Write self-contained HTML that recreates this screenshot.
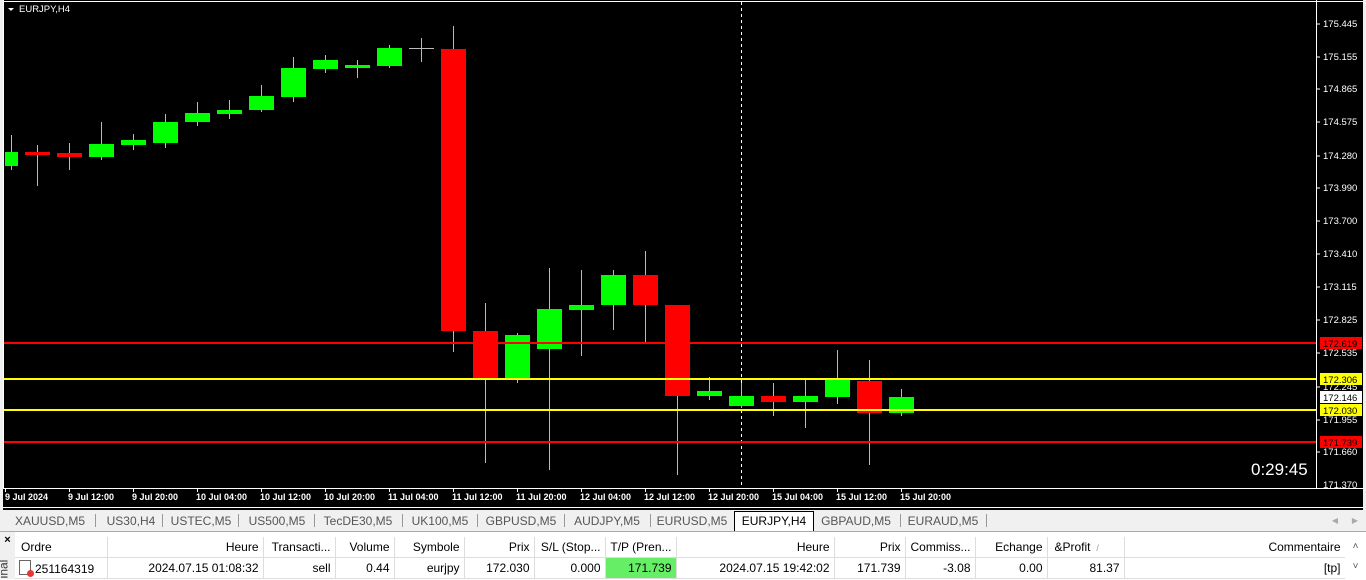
<!DOCTYPE html>
<html><head><meta charset="utf-8"><style>
body{margin:0;width:1366px;height:579px;overflow:hidden;background:#f0f0f0;font-family:"Liberation Sans",sans-serif;position:relative}
.abs{position:absolute}
svg text{font-family:"Liberation Sans",sans-serif}
.tabs{top:510px;left:0;width:1366px;height:21px;background:#f0f0f0;font-size:12px;color:#555}
.tab{position:absolute;top:3px;height:16px;line-height:16px;text-align:center}
.sep{position:absolute;top:4px;width:1px;height:13px;background:#999}
table{border-collapse:collapse;font-size:12px;color:#000;table-layout:fixed}
td{border-right:1px solid #ddd;border-bottom:1px solid #ddd;padding:0 4px;height:20px;white-space:nowrap;overflow:hidden;text-align:right;background:#fff}
</style></head><body>
<svg class="abs" style="left:0;top:0" width="1366" height="510">
<rect x="0" y="0" width="1366" height="510" fill="#000"/>
<rect x="0" y="0" width="3" height="510" fill="#f0f0f0"/>
<rect x="1363" y="0" width="3" height="510" fill="#f0f0f0"/>
<line x1="3" y1="1.5" x2="1363" y2="1.5" stroke="#fff"/>
<line x1="3.5" y1="0" x2="3.5" y2="489" stroke="#fff"/>
<line x1="1316.5" y1="0" x2="1316.5" y2="489" stroke="#fff"/>
<line x1="3" y1="488.5" x2="1363" y2="488.5" stroke="#fff"/>
<line x1="3" y1="507.5" x2="1363" y2="507.5" stroke="#fff"/>
<polygon points="8,8 14,8 11,11" fill="#fff"/>
<text x="19" y="12" fill="#fff" font-size="9.5">EURJPY,H4</text>
<line x1="741.5" y1="2" x2="741.5" y2="488" stroke="#fff" stroke-dasharray="3,3"/>
<g stroke="#bbb" stroke-width="1">
<line x1="11.5" y1="135" x2="11.5" y2="170"/><line x1="37.5" y1="145" x2="37.5" y2="186"/><line x1="69.5" y1="143" x2="69.5" y2="170"/><line x1="101.5" y1="122" x2="101.5" y2="160"/><line x1="133.5" y1="134" x2="133.5" y2="150"/><line x1="165.5" y1="114" x2="165.5" y2="148"/><line x1="197.5" y1="102" x2="197.5" y2="126"/><line x1="229.5" y1="100" x2="229.5" y2="119"/><line x1="261.5" y1="85" x2="261.5" y2="112"/><line x1="293.5" y1="57" x2="293.5" y2="102"/><line x1="325.5" y1="55" x2="325.5" y2="73"/><line x1="357.5" y1="60" x2="357.5" y2="78"/><line x1="389.5" y1="45" x2="389.5" y2="68"/><line x1="421.5" y1="38" x2="421.5" y2="62"/><line x1="409" y1="48.5" x2="434" y2="48.5"/><line x1="453.5" y1="26" x2="453.5" y2="352"/><line x1="485.5" y1="303" x2="485.5" y2="463"/><line x1="517.5" y1="333" x2="517.5" y2="383"/><line x1="549.5" y1="268" x2="549.5" y2="470"/><line x1="581.5" y1="270" x2="581.5" y2="356"/><line x1="613.5" y1="270" x2="613.5" y2="330"/><line x1="645.5" y1="251" x2="645.5" y2="342"/><line x1="677.5" y1="305" x2="677.5" y2="475"/><line x1="709.5" y1="377" x2="709.5" y2="400"/><line x1="741.5" y1="383" x2="741.5" y2="408"/><line x1="773.5" y1="383" x2="773.5" y2="416"/><line x1="805.5" y1="380" x2="805.5" y2="428"/><line x1="837.5" y1="350" x2="837.5" y2="404"/><line x1="869.5" y1="360" x2="869.5" y2="465"/><line x1="901.5" y1="389" x2="901.5" y2="416"/>
</g>
<g fill="#00ff00">
<rect x="5" y="152" width="13" height="14"/><rect x="89" y="144" width="25" height="13"/><rect x="121" y="140" width="25" height="5"/><rect x="153" y="122" width="25" height="21"/><rect x="185" y="113" width="25" height="9"/><rect x="217" y="110" width="25" height="4"/><rect x="249" y="96" width="25" height="14"/><rect x="281" y="68" width="25" height="29"/><rect x="313" y="60" width="25" height="9"/><rect x="345" y="65" width="25" height="3"/><rect x="377" y="48" width="25" height="18"/><rect x="505" y="335" width="25" height="44"/><rect x="537" y="309" width="25" height="40"/><rect x="569" y="305" width="25" height="5"/><rect x="601" y="275" width="25" height="30"/><rect x="697" y="391" width="25" height="5"/><rect x="729" y="396" width="25" height="10"/><rect x="793" y="396" width="25" height="6"/><rect x="825" y="379" width="25" height="18"/><rect x="889" y="397" width="25" height="16"/>
</g>
<g fill="#ff0000">
<rect x="25" y="152" width="25" height="3"/><rect x="57" y="153" width="25" height="4"/><rect x="441" y="49" width="25" height="282"/><rect x="473" y="331" width="25" height="48"/><rect x="633" y="275" width="25" height="30"/><rect x="665" y="305" width="25" height="91"/><rect x="761" y="396" width="25" height="6"/><rect x="857" y="381" width="25" height="32"/>
</g>
<line x1="4" y1="343" x2="1316" y2="343" stroke="#ff0000" stroke-width="2"/>
<line x1="4" y1="379" x2="1316" y2="379" stroke="#ffff00" stroke-width="2"/>
<line x1="4" y1="410" x2="1316" y2="410" stroke="#ffff00" stroke-width="2"/>
<line x1="4" y1="442" x2="1316" y2="442" stroke="#ff0000" stroke-width="2"/>
<g fill="#fff" font-size="9.5">
<text x="1323" y="27">175.445</text><text x="1323" y="60">175.155</text><text x="1323" y="92">174.865</text><text x="1323" y="125">174.575</text><text x="1323" y="159">174.280</text><text x="1323" y="191">173.990</text><text x="1323" y="224">173.700</text><text x="1323" y="257">173.410</text><text x="1323" y="290">173.115</text><text x="1323" y="323">172.825</text><text x="1323" y="356">172.535</text><text x="1323" y="390">172.245</text><text x="1323" y="423">171.955</text><text x="1323" y="455">171.660</text><text x="1323" y="488">171.370</text>
</g>
<g stroke="#fff"><line x1="1317" y1="24" x2="1320" y2="24"/><line x1="1317" y1="57" x2="1320" y2="57"/><line x1="1317" y1="89" x2="1320" y2="89"/><line x1="1317" y1="122" x2="1320" y2="122"/><line x1="1317" y1="156" x2="1320" y2="156"/><line x1="1317" y1="188" x2="1320" y2="188"/><line x1="1317" y1="221" x2="1320" y2="221"/><line x1="1317" y1="254" x2="1320" y2="254"/><line x1="1317" y1="287" x2="1320" y2="287"/><line x1="1317" y1="320" x2="1320" y2="320"/><line x1="1317" y1="353" x2="1320" y2="353"/><line x1="1317" y1="387" x2="1320" y2="387"/><line x1="1317" y1="420" x2="1320" y2="420"/><line x1="1317" y1="452" x2="1320" y2="452"/></g>
<rect x="1320" y="337" width="42" height="12" fill="#ff0000"/><text x="1323" y="347" font-size="9.5" fill="#000">172.619</text>
<rect x="1320" y="373" width="42" height="12" fill="#ffff00"/><text x="1323" y="383" font-size="9.5" fill="#000">172.306</text>
<rect x="1320" y="391" width="42" height="12" fill="#fff"/><text x="1323" y="401" font-size="9.5" fill="#000">172.146</text>
<rect x="1320" y="404" width="42" height="12" fill="#ffff00"/><text x="1323" y="414" font-size="9.5" fill="#000">172.030</text>
<rect x="1320" y="436" width="42" height="12" fill="#ff0000"/><text x="1323" y="446" font-size="9.5" fill="#000">171.739</text>
<text x="1251" y="475" fill="#fff" font-size="17">0:29:45</text>
<g fill="#fff" font-size="9" font-weight="bold">
<text x="5" y="500">9 Jul 2024</text><text x="68" y="500">9 Jul 12:00</text><text x="132" y="500">9 Jul 20:00</text><text x="196" y="500">10 Jul 04:00</text><text x="260" y="500">10 Jul 12:00</text><text x="324" y="500">10 Jul 20:00</text><text x="388" y="500">11 Jul 04:00</text><text x="452" y="500">11 Jul 12:00</text><text x="516" y="500">11 Jul 20:00</text><text x="580" y="500">12 Jul 04:00</text><text x="644" y="500">12 Jul 12:00</text><text x="708" y="500">12 Jul 20:00</text><text x="772" y="500">15 Jul 04:00</text><text x="836" y="500">15 Jul 12:00</text><text x="900" y="500">15 Jul 20:00</text>
</g>
<g stroke="#fff"><line x1="5.5" y1="489" x2="5.5" y2="492"/><line x1="69.5" y1="489" x2="69.5" y2="492"/><line x1="133.5" y1="489" x2="133.5" y2="492"/><line x1="197.5" y1="489" x2="197.5" y2="492"/><line x1="261.5" y1="489" x2="261.5" y2="492"/><line x1="325.5" y1="489" x2="325.5" y2="492"/><line x1="389.5" y1="489" x2="389.5" y2="492"/><line x1="453.5" y1="489" x2="453.5" y2="492"/><line x1="517.5" y1="489" x2="517.5" y2="492"/><line x1="581.5" y1="489" x2="581.5" y2="492"/><line x1="645.5" y1="489" x2="645.5" y2="492"/><line x1="709.5" y1="489" x2="709.5" y2="492"/><line x1="773.5" y1="489" x2="773.5" y2="492"/><line x1="837.5" y1="489" x2="837.5" y2="492"/><line x1="901.5" y1="489" x2="901.5" y2="492"/></g>
</svg>
<div class="abs tabs">
<div class="tab" style="left:12px;width:76px">XAUUSD,M5</div><div class="sep" style="left:95px"></div>
<div class="tab" style="left:100px;width:62px">US30,H4</div><div class="sep" style="left:162px"></div>
<div class="tab" style="left:166px;width:70px">USTEC,M5</div><div class="sep" style="left:238px"></div>
<div class="tab" style="left:242px;width:70px">US500,M5</div><div class="sep" style="left:314px"></div>
<div class="tab" style="left:318px;width:80px">TecDE30,M5</div><div class="sep" style="left:402px"></div>
<div class="tab" style="left:406px;width:68px">UK100,M5</div><div class="sep" style="left:477px"></div>
<div class="tab" style="left:482px;width:78px">GBPUSD,M5</div><div class="sep" style="left:564px"></div>
<div class="tab" style="left:568px;width:78px">AUDJPY,M5</div><div class="sep" style="left:650px"></div>
<div class="tab" style="left:654px;width:76px">EURUSD,M5</div>
<div class="tab" style="left:734px;top:1px;width:78px;height:19px;line-height:19px;background:#fff;border:1px solid #000;border-bottom:none;color:#000">EURJPY,H4</div>
<div class="tab" style="left:816px;width:80px">GBPAUD,M5</div><div class="sep" style="left:900px"></div>
<div class="tab" style="left:904px;width:78px">EURAUD,M5</div><div class="sep" style="left:986px"></div>
<div class="tab" style="left:1330px;width:10px;color:#aaa;font-size:8px">◀</div><div class="tab" style="left:1350px;width:10px;color:#aaa;font-size:8px">▶</div>
</div>
<div class="abs" style="left:0;top:531px;width:1366px;height:48px;background:#fff;border-top:1px solid #aaa"></div>
<div class="abs" style="left:0;top:532px;width:15px;height:47px;background:#f0f0f0;font-size:11px"><div style="text-align:center;font-weight:bold;margin-top:2px">×</div><div style="transform:rotate(-90deg);position:absolute;left:-6px;top:30px;font-size:12px;color:#333">inal</div></div>
<table class="abs" style="left:15px;top:537px;width:1330px">
<colgroup><col style="width:92px"><col style="width:156px"><col style="width:72px"><col style="width:59px"><col style="width:70px"><col style="width:70px"><col style="width:71px"><col style="width:71px"><col style="width:158px"><col style="width:71px"><col style="width:70px"><col style="width:72px"><col style="width:77px"><col style="width:221px"></colgroup>
<tr><td style="text-align:left;padding-left:6px">Ordre</td><td>Heure</td><td>Transacti...</td><td>Volume</td><td>Symbole</td><td>Prix</td><td>S/L (Stop...</td><td>T/P (Pren...</td><td>Heure</td><td>Prix</td><td>Commiss...</td><td>Echange</td><td style="text-align:left;padding-left:7px">&amp;Profit <span style="color:#999;font-size:9px">&nbsp;/</span></td><td>Commentaire</td></tr>
<tr><td style="text-align:left;padding-left:4px"><span style="display:inline-block;width:10px;height:13px;border:1px solid #666;vertical-align:-2px;position:relative;margin-right:4px"><span style="position:absolute;right:-4px;bottom:-3px;width:7px;height:7px;border-radius:50%;background:#e33"></span></span>251164319</td><td>2024.07.15 01:08:32</td><td>sell</td><td>0.44</td><td>eurjpy</td><td>172.030</td><td>0.000</td><td style="background:#66ee66">171.739</td><td>2024.07.15 19:42:02</td><td>171.739</td><td>-3.08</td><td>0.00</td><td>81.37</td><td>[tp]</td></tr>
</table>
<div class="abs" style="left:1345px;top:537px;width:21px;height:42px;background:#fff;font-size:10px;color:#555;text-align:center;line-height:20px">˄<br>˅</div>
</body></html>
